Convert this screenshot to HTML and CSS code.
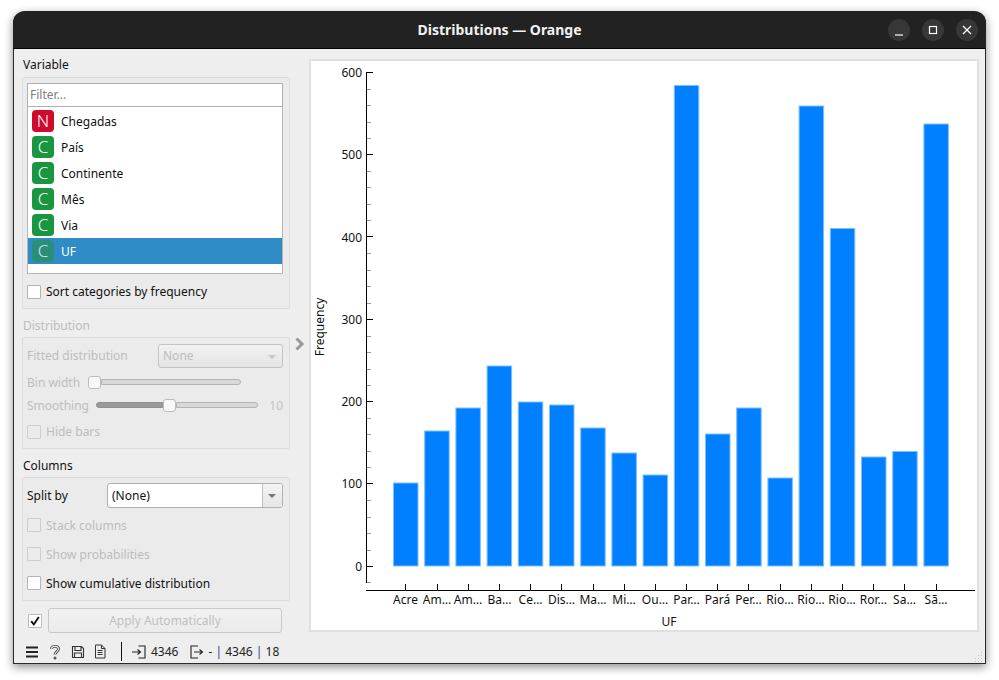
FILE: index.html
```html
<!DOCTYPE html>
<html lang="en">
<head>
    <meta charset="UTF-8">
    <title>Distributions — Orange</title>
    <link rel="stylesheet" href="styles.css">
</head>
<body>
    <div class="window">
        <div class="titlebar">
            <span></span>
            <span class="title">Distributions — Orange</span>
            <div class="winbtns">
                <button class="winbtn"><svg width="22" height="22" viewBox="0 0 22 22"><path d="M7 16h8" stroke="#fff" stroke-width="1.2" fill="none"/></svg></button>
                <button class="winbtn"><svg width="22" height="22" viewBox="0 0 22 22"><rect x="7.5" y="7.5" width="7" height="7" stroke="#fff" stroke-width="1.2" fill="none"/></svg></button>
                <button class="winbtn"><svg width="22" height="22" viewBox="0 0 22 22"><path d="M7 7l8 8M15 7l-8 8" stroke="#fff" stroke-width="1.3" fill="none"/></svg></button>
            </div>
        </div>

        <div class="main">
            <div class="sidebar">
                <div class="group-label">Variable</div>
                <div class="group group-variable">
                    <div class="filter">Filter...</div>
                    <div class="varlist">
                        <div class="varrow"><span class="badge badge-n">N</span>Chegadas</div>
                        <div class="varrow"><span class="badge badge-c">C</span>País</div>
                        <div class="varrow"><span class="badge badge-c">C</span>Continente</div>
                        <div class="varrow"><span class="badge badge-c">C</span>Mês</div>
                        <div class="varrow"><span class="badge badge-c">C</span>Via</div>
                        <div class="varrow selected"><span class="badge badge-c">C</span>UF</div>
                    </div>
                    <label class="check check-sort"><span class="box"></span>Sort categories by frequency</label>
                </div>

                <div class="group-label disabled next">Distribution</div>
                <div class="group group-dist disabled">
                    <div class="row row-fitted">
                        <span class="fitted-name">Fitted distribution</span>
                        <div class="combo combo-off">None<i class="caret"></i></div>
                    </div>
                    <div class="row row-bin">
                        <span class="slider-name-bin">Bin width</span>
                        <div class="slider slider-bin"><span class="handle"></span><span class="rest"></span></div>
                    </div>
                    <div class="row row-smooth">
                        <span class="slider-name">Smoothing</span>
                        <div class="slider slider-smooth"><span class="fill"></span><span class="handle"></span><span class="rest"></span></div>
                        <span class="slider-val">10</span>
                    </div>
                    <label class="check check-hide"><span class="box"></span>Hide bars</label>
                </div>

                <div class="group-label next">Columns</div>
                <div class="group group-cols">
                    <div class="row row-split">
                        <span class="split-name">Split by</span>
                        <div class="combo combo-on">(None)<span class="combo-arrow"><i class="caret"></i></span></div>
                    </div>
                    <label class="check check-col disabled"><span class="box"></span>Stack columns</label>
                    <label class="check check-col disabled"><span class="box"></span>Show probabilities</label>
                    <label class="check check-col"><span class="box"></span>Show cumulative distribution</label>
                </div>

                <div class="apply">
                    <span class="box box-on"><svg width="12" height="12" viewBox="0 0 12 12"><path d="M2.2 6.2l2.6 3.3 5-7.500" stroke="#111" stroke-width="1.9" fill="none"/></svg></span>
                    <button class="apply-btn">Apply Automatically</button>
                </div>
            </div>

            <div class="splitter">
                <svg width="11" height="14" viewBox="0 0 11 14"><path d="M2.500 1.500l5.500 5.500-5.500 5.500" stroke="#999" stroke-width="3" fill="none"/></svg>
            </div>

            <div class="plot">
                <svg class="chart" width="666" height="569" viewBox="311 61 666 569">
                    <g class="bars">
                        <rect x="393.5" y="483" width="24.5" height="83"/>
                        <rect x="424.7" y="431" width="24.5" height="135"/>
                        <rect x="455.9" y="408" width="24.5" height="158"/>
                        <rect x="487.1" y="366" width="24.5" height="200"/>
                        <rect x="518.3" y="402" width="24.5" height="164"/>
                        <rect x="549.5" y="405" width="24.5" height="161"/>
                        <rect x="580.7" y="428" width="24.5" height="138"/>
                        <rect x="611.9" y="453" width="24.5" height="113"/>
                        <rect x="643.1" y="475" width="24.5" height="91"/>
                        <rect x="674.3" y="85.5" width="24.5" height="480.5"/>
                        <rect x="705.5" y="434" width="24.5" height="132"/>
                        <rect x="736.7" y="408" width="24.5" height="158"/>
                        <rect x="767.9" y="478" width="24.5" height="88"/>
                        <rect x="799.1" y="106" width="24.5" height="460"/>
                        <rect x="830.3" y="228.5" width="24.5" height="337.5"/>
                        <rect x="861.5" y="457" width="24.5" height="109"/>
                        <rect x="892.7" y="451.5" width="24.5" height="114.5"/>
                        <rect x="923.9" y="124" width="24.5" height="442"/>
                    </g>
                    <path class="axis" d="M366.5 72V583M366 590.5H975"/>
                    <path class="axis" d="M366 72.5h7M366 154.5h7M366 236.5h7M366 319.5h7M366 401.5h7M366 483.5h7M366 566.5h7"/>
                    <path class="minor" d="M367 89.500h4M367 105.500h4M367 122.500h4M367 138.500h4M367 171.500h4M367 187.500h4M367 204.500h4M367 220.500h4M367 253.500h4M367 270.500h4M367 286.500h4M367 303.500h4M367 336.500h4M367 352.500h4M367 369.500h4M367 385.500h4M367 418.500h4M367 434.500h4M367 451.500h4M367 467.500h4M367 500.500h4M367 517.500h4M367 533.500h4M367 550.500h4M367 582.500h4"/>
                    <path class="axis" d="M405.5 584v6M437.5 584v6M468.5 584v6M499.5 584v6M530.5 584v6M561.5 584v6M593.5 584v6M624.5 584v6M655.5 584v6M686.5 584v6M717.5 584v6M748.5 584v6M780.5 584v6M811.5 584v6M842.5 584v6M873.5 584v6M904.5 584v6M936.5 584v6"/>
                    <g class="ylabels">
                        <text x="362" y="77">600</text>
                        <text x="362" y="159">500</text>
                        <text x="362" y="242">400</text>
                        <text x="362" y="324">300</text>
                        <text x="362" y="406">200</text>
                        <text x="362" y="488">100</text>
                        <text x="362" y="571">0</text>
                    </g>
                    <g class="xlabels">
                        <text x="405.5" y="604">Acre</text>
                        <text x="437" y="604">Am…</text>
                        <text x="468" y="604">Am…</text>
                        <text x="499.5" y="604">Ba…</text>
                        <text x="530.5" y="604">Ce…</text>
                        <text x="561.5" y="604">Dis…</text>
                        <text x="593" y="604">Ma…</text>
                        <text x="624" y="604">Mi…</text>
                        <text x="655" y="604">Ou…</text>
                        <text x="686.5" y="604">Par…</text>
                        <text x="717.5" y="604">Pará</text>
                        <text x="748.5" y="604">Per…</text>
                        <text x="780" y="604">Rio…</text>
                        <text x="811" y="604">Rio…</text>
                        <text x="842" y="604">Rio…</text>
                        <text x="873.5" y="604">Ror…</text>
                        <text x="904.5" y="604">Sa…</text>
                        <text x="936" y="604">Sã…</text>
                        <text x="669" y="626">UF</text>
                    </g>
                    <text class="ytitle" transform="translate(324 327) rotate(-90)">Frequency</text>
                </svg>
            </div>
        </div>

        <div class="statusbar">
            <svg class="sticon" width="14" height="14" viewBox="0 0 14 14"><path d="M1 2.500h12M1 7h12M1 11.500h12" stroke="#222" stroke-width="2" fill="none"/></svg>
            <svg class="sticon" width="14" height="16" viewBox="0 0 14 16"><path d="M3.500 5C3.500 1.500 10.500 1.500 10.500 5c0 2.600-3.500 2.600-3.500 5.500" stroke="#444" stroke-width="2.8" fill="none"/><path d="M3.500 5C3.500 1.500 10.500 1.500 10.500 5c0 2.600-3.500 2.600-3.500 5.500" stroke="#eee" stroke-width="1.1" fill="none"/><circle cx="7" cy="14" r="1.5" fill="#555"/></svg>
            <svg class="sticon" width="14" height="14" viewBox="0 0 14 14"><path d="M1.500 1.500h9l2 2v9h-11zM4 1.500v4h6v-4M3.500 12.500v-4.500h7v4.500" stroke="#333" stroke-width="1.1" fill="none"/></svg>
            <svg class="sticon" width="12" height="15" viewBox="0 0 12 15"><path d="M1.500 1h6l3.500 3.500v9.500h-9.500zM7.500 1v3.500h3.500M3.500 6.500h5M3.500 8.500h5M3.500 10.500h5" stroke="#333" stroke-width="1" fill="none"/></svg>
            <span class="stdivider"></span>
            <svg class="stio" width="14" height="14" viewBox="0 0 14 14"><path d="M0 7h8M5.500 4.500L8.500 7l-3 2.500M6.500 1h6.500v12h-6.500" stroke="#222" stroke-width="1.1" fill="none"/></svg>
            <span class="stcount">4346</span>
            <svg class="stio stout" width="14" height="14" viewBox="0 0 14 14"><path d="M8 1H1v12h7M4 7h8M9.500 4.500l3 2.500-3 2.500" stroke="#222" stroke-width="1.1" fill="none"/></svg>
            <span class="stcount">- <span class="pipe">|</span> 4346 <span class="pipe">|</span> 18</span>
            <svg class="grip" width="10" height="10" viewBox="0 0 10 10"><path d="M8 0h1v1H8zM8 3h1v1H8zM5 3h1v1H5zM8 6h1v1H8zM5 6h1v1H5zM2 6h1v1H2zM8 9h1v1H8zM5 9h1v1H5zM2 9h1v1H2z" fill="#c4c4c4"/></svg>
        </div>
    </div>
</body>
</html>
```

FILE: styles.css
```css
html, body {
    margin: 0;
    height: 100%;
    background: #fff;
    overflow: hidden;
}
body {
    padding: 11px 0 0 13px;
    box-sizing: border-box;
    font-family: "Noto Sans", sans-serif;
    font-size: 12px;
    color: #111;
}
.window {
    width: 973px;
    height: 653px;
    box-sizing: border-box;
    display: flex;
    flex-direction: column;
    background: #eee;
    border: 1px solid #2a2a2a;
    border-top: none;
    border-radius: 12px 12px 0 0;
    box-shadow: 0 3px 10px rgba(0, 0, 0, .45);
}

/* title bar */
.titlebar {
    height: 37px;
    flex: none;
    margin: 0 -1px;
    padding: 0 8px;
    display: grid;
    grid-template-columns: 1fr auto 1fr;
    align-items: center;
    background: #222;
    border-bottom: 1px solid #000;
    border-radius: 12px 12px 0 0;
}
.title {
    color: #f2f2f2;
    font-size: 14px;
    font-weight: 700;
}
.winbtns {
    display: flex;
    justify-content: flex-end;
    gap: 12px;
}
.winbtn {
    width: 22px;
    height: 22px;
    padding: 0;
    border: none;
    border-radius: 50%;
    background: #373737;
}
.winbtn svg {
    display: block;
}

/* main area */
.main {
    flex: 1;
    display: flex;
    min-height: 0;
    padding-left: 8px;
}
.sidebar {
    width: 268px;
    flex: none;
    padding-top: 8px;
}
.group-label {
    height: 16px;
    line-height: 16px;
    margin: 0 0 4px 1px;
}
.group-label.next {
    margin-top: 9px;
    margin-bottom: 3px;
}
.group {
    box-sizing: border-box;
    background: #ebebeb;
    border: 1px solid #dcdcdc;
    border-radius: 2px;
    padding: 5px 6px 0 4px;
}
.disabled {
    color: #bdbdbd;
}
.group-variable {
    height: 232px;
}
.group-dist {
    height: 112px;
}
.group-cols {
    height: 124px;
}

/* variable list */
.filter {
    height: 24px;
    box-sizing: border-box;
    padding-left: 2px;
    background: #fff;
    color: #808080;
    border: 1px solid #b0b0b0;
    line-height: 22px;
}
.varlist {
    height: 167px;
    box-sizing: border-box;
    background: #fff;
    border: 1px solid #b5b5b5;
    border-top: none;
    padding-top: 1px;
}
.varrow {
    height: 26px;
    display: flex;
    align-items: center;
    padding-left: 4px;
}
.varrow.selected {
    background: #308cc6;
    color: #fff;
}
.badge {
    width: 22px;
    height: 22px;
    margin-right: 7px;
    border-radius: 4px;
    color: #fff;
    font-size: 17px;
    font-weight: 300;
    line-height: 22px;
    text-align: center;
}
.badge-n {
    background: #cf0a2c;
}
.badge-c {
    background: #1a9641;
}
.selected .badge {
    background: #2a8f78;
    color: #cfe6ee;
}

/* checkboxes */
.check {
    display: flex;
    align-items: center;
    gap: 5px;
}
.box {
    width: 14px;
    height: 14px;
    flex: none;
    background: #fff;
    border: 1px solid #b4b4b4;
    border-radius: 1px;
    box-sizing: border-box;
}
.disabled .box {
    background: #ebebeb;
    border-color: #cdcdcd;
}
.check-sort {
    margin-top: 9px;
}
.check-hide {
    margin-top: 10px;
}
.check-col {
    height: 14px;
    margin-top: 15px;
}
.check-col:nth-child(2) {
    margin-top: 10px;
}

/* rows, combos */
.row {
    display: flex;
    align-items: center;
}
.row-fitted {
    height: 24px;
    margin-top: 1px;
    justify-content: space-between;
}
.fitted-name {
    margin-top: -1px;
}
.row-bin {
    height: 16px;
    margin-top: 6px;
}
.row-smooth {
    height: 16px;
    margin-top: 7px;
}
.combo {
    box-sizing: border-box;
    height: 24px;
    line-height: 21px;
    border: 1px solid #c4c4c4;
    border-radius: 3px;
    padding-left: 4px;
    position: relative;
}
.combo-off {
    width: 125px;
    background: linear-gradient(#f2f2f2, #e4e4e4);
}
.combo-on {
    width: 176px;
    height: 25px;
    line-height: 23px;
    color: #111;
    background: #fff;
    border-color: #b0b0b0;
}
.caret {
    position: absolute;
    right: 6px;
    top: 10px;
    border: 4px solid transparent;
    border-top: 4px solid #c4c4c4;
    border-bottom: none;
}
.combo-on .caret {
    border-top-color: #777;
}
.combo-arrow {
    position: absolute;
    right: 0;
    top: 0;
    bottom: 0;
    width: 19px;
    background: linear-gradient(#f4f4f4, #e6e6e6);
    border-left: 1px solid #c0c0c0;
    border-radius: 0 3px 3px 0;
}
.row-split {
    height: 25px;
    justify-content: space-between;
}

/* sliders */
.slider {
    display: flex;
    align-items: center;
}
.slider-name-bin {
    width: 61px;
}
.slider-name {
    width: 69px;
}
.slider-bin {
    width: 153px;
}
.slider-smooth {
    width: 163px;
}
.slider-val {
    margin-left: 11px;
    color: #c4c4c4;
}
.fill {
    width: 67px;
    height: 6px;
    box-sizing: border-box;
    background: #9a9a9a;
    border: 1px solid #909090;
    border-radius: 3px 0 0 3px;
}
.rest {
    flex: 1;
    height: 6px;
    box-sizing: border-box;
    background: #d8d8d8;
    border: 1px solid #b4b4b4;
    border-radius: 0 3px 3px 0;
}
.handle {
    width: 13px;
    height: 13px;
    box-sizing: border-box;
    flex: none;
    background: #f8f8f8;
    border: 1px solid #bcbcbc;
    border-radius: 3px;
}

/* apply row */
.apply {
    display: flex;
    align-items: center;
    gap: 6px;
    margin-top: 7px;
    padding-left: 6px;
}
.box-on {
    display: flex;
    align-items: center;
    justify-content: center;
    background: #fff;
    border-color: #bbb;
}
.apply-btn {
    width: 234px;
    height: 25px;
    padding: 0;
    font: inherit;
    color: #c0c0c0;
    background: linear-gradient(#f2f2f2, #ebebeb);
    border: 1px solid #c8c8c8;
    border-radius: 3px;
}

/* splitter */
.splitter {
    width: 19px;
    flex: none;
    box-sizing: border-box;
    padding: 288px 0 0 4px;
}
.splitter svg {
    display: block;
}

/* plot */
.plot {
    width: 670px;
    height: 573px;
    flex: none;
    box-sizing: border-box;
    margin-top: 10px;
    background: #fff;
    border: 2px solid #e0e0e0;
}
.chart {
    display: block;
}
.chart text {
    font-family: "Noto Sans", sans-serif;
    font-size: 12px;
    fill: #111;
}
.bars rect {
    fill: #0080ff;
    stroke: #7fbfff;
    stroke-width: 1px;
}
.axis {
    stroke: #000;
    stroke-width: 1px;
    fill: none;
}
.minor {
    stroke: #999;
    stroke-width: 1px;
    fill: none;
}
.ylabels text {
    text-anchor: end;
}
.xlabels text {
    text-anchor: middle;
}
.ytitle {
    text-anchor: middle;
}

/* status bar */
.statusbar {
    height: 23px;
    flex: none;
    display: flex;
    align-items: center;
    padding-left: 11px;
    position: relative;
}
.sticon {
    margin-right: 9px;
    flex: none;
}
.stdivider {
    width: 1px;
    height: 19px;
    background: #111;
    margin: 0 10px 0 6px;
}
.stio {
    margin-right: 5px;
}
.stout {
    margin: 0 4px 0 12px;
}
.stcount {
    color: #222;
}
.pipe {
    color: #1a3f80;
}
.grip {
    position: absolute;
    right: 2px;
    bottom: 1px;
}
```
